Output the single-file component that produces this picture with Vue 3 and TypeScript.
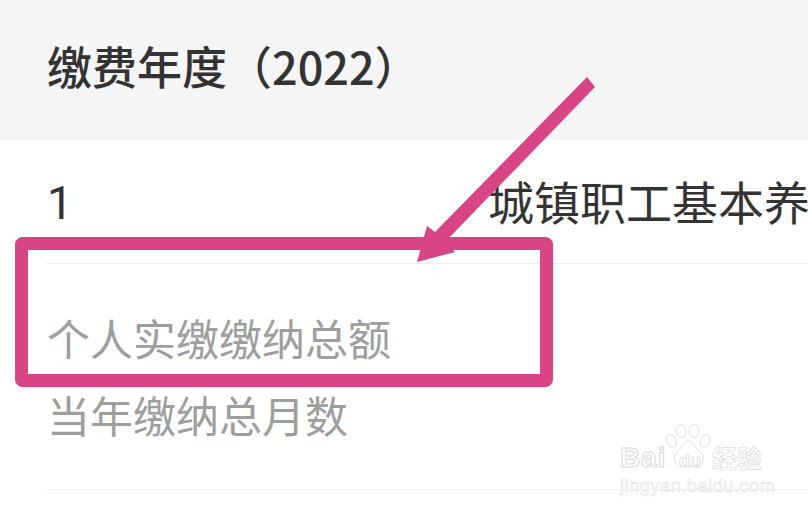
<script setup lang="ts">
const title = '缴费年度（2022）'
const labels = ['个人实缴缴纳总额', '当年缴纳总月数']
</script>

<template>
  <div class="page">
    <header class="head">{{ title }}</header>
    <section class="row">
      <span class="num">1</span>
      <span class="name">城镇职工基本养老保险</span>
    </section>
    <section class="detail">
      <div v-for="l in labels" :key="l" class="label">{{ l }}</div>
    </section>

    <svg class="mark" viewBox="0 0 808 511" aria-hidden="true">
      <rect x="21.5" y="243.5" width="525" height="137" fill="none" stroke="#d94485" stroke-width="13" rx="1" />
      <path d="M595 87 L587 77 L435 232 L427 226 L417 262 L455 252 L446 241 Z" fill="#d94485" />
    </svg>

    <div class="wm">
      <svg class="paw" viewBox="0 0 46 44" aria-hidden="true">
        <g fill="#fff" stroke="#e0e0e0" stroke-width="1">
          <ellipse cx="5.5" cy="17" rx="4.5" ry="6.5" transform="rotate(-25 5.5 17)" />
          <ellipse cx="15" cy="7" rx="5" ry="6.5" />
          <ellipse cx="28" cy="7" rx="5" ry="6.5" />
          <ellipse cx="39" cy="17" rx="4.5" ry="6.5" transform="rotate(25 39 17)" />
          <path d="M22.5 17 C17 17 17 23 12 27 C6 30 7 43 17 43 C19 43 20 42 22.5 42 C25 42 27 43 29 43 C38 43 40 30 33 27 C28 23 28 17 22.5 17 Z" />
        </g>
      </svg>
      <div class="wm-line">
        <span class="wm-bai">Bai</span><span class="wm-du">du</span><span class="wm-cn">经验</span>
      </div>
      <div class="wm-url">jingyan.baidu.com</div>
    </div>
  </div>
</template>

<style>
html, body { margin: 0; background: #fff; }
</style>

<style scoped>
.page {
  position: relative;
  width: 808px;
  height: 511px;
  overflow: hidden;
  background: #fff;
  font-family: "Noto Sans CJK SC", "Noto Sans", sans-serif;
}
.head {
  height: 140px;
  box-sizing: border-box;
  padding: 35px 0 0 47px;
  background: #f5f5f5;
  color: #333;
  font-size: 45px;
  font-weight: 500;
  line-height: 62px;
  white-space: nowrap;
}
.row {
  display: flex;
  align-items: center;
  height: 124px;
  box-sizing: border-box;
  margin-left: 47px;
  border-bottom: 1px solid #eee;
  color: #333;
  white-space: nowrap;
  overflow: hidden;
}
.num { flex: none; width: 441px; font-size: 46px; font-family: "Roboto", sans-serif; font-weight: 400; padding-top: 2px; }
.name { flex: none; font-size: 46px; line-height: 60px; margin-top: -4px; }
.detail {
  height: 226px;
  box-sizing: border-box;
  margin-left: 47px;
  padding-top: 43px;
  border-bottom: 1px solid #eee;
  color: #9e9e9e;
  font-size: 43px;
  line-height: 60px;
}
.label { height: 77px; white-space: nowrap; }
.mark { position: absolute; inset: 0; width: 808px; height: 511px; }
.wm {
  position: absolute;
  left: 619px;
  top: 424px;
  width: 150px;
  height: 72px;
  color: #fff;
  pointer-events: none;
}
.paw { position: absolute; left: 47px; top: 0; width: 46px; height: 44px; }
.wm-line {
  position: absolute;
  left: 0;
  top: 12px;
  width: 150px;
  height: 36px;
  white-space: nowrap;
  color: #fff;
}
.wm-bai { position: absolute; left: 1px; top: 7px; font: 700 28px/30px "Liberation Sans", sans-serif; letter-spacing: 1px; -webkit-text-stroke: 1px #d8d8d8; }
.wm-du { position: absolute; left: 60px; top: 15px; font: 700 18px/20px "Liberation Sans", sans-serif; -webkit-text-stroke: 0.7px #d8d8d8; }
.wm-cn { position: absolute; left: 93px; top: 5px; font: 700 25px/32px "Noto Sans CJK SC", sans-serif; -webkit-text-stroke: 0.7px #d8d8d8; }
.wm-url {
  position: absolute;
  left: 1px;
  top: 52px;
  font: 400 18px/20px "Liberation Sans", sans-serif;
  letter-spacing: 0.6px;
  color: #fff;
  -webkit-text-stroke: 0.6px #e0e0e0;
  white-space: nowrap;
}
</style>
